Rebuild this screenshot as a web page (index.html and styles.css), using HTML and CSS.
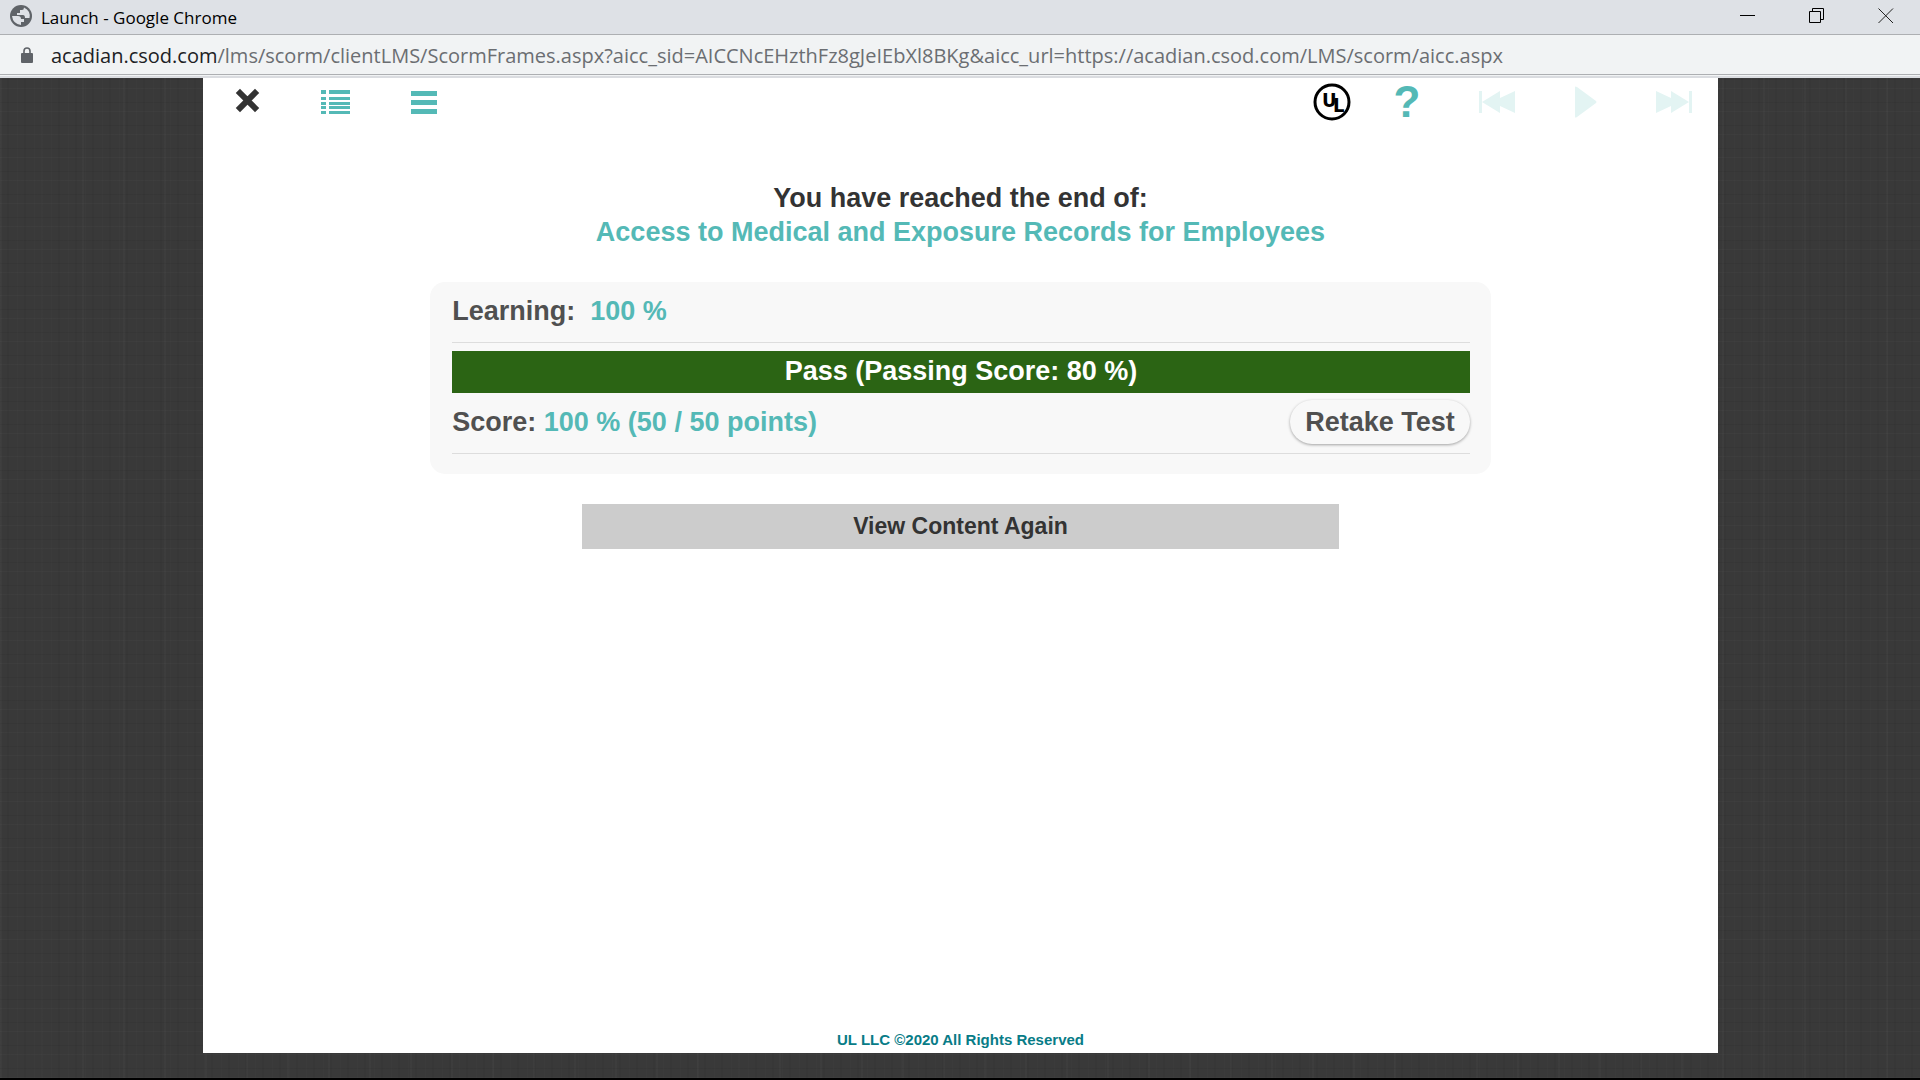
FILE: index.html
```html
<!DOCTYPE html>
<html lang="en">
<head>
<meta charset="UTF-8">
<meta name="viewport" content="width=device-width, initial-scale=1.0">
<title>Launch</title>
<link rel="stylesheet" href="styles.css">
</head>
<body>

<!-- Window title bar -->
<div class="titlebar">
    <svg class="globe" viewBox="0 0 22 22" width="22" height="22" aria-hidden="true">
        <circle cx="11" cy="11" r="11" fill="#5f6368"/>
        <path d="M2 11H8Q11 11 11 14H14V17H11V20Q3 19 2 11ZM14 2.500Q14 5 12 5H10V8H7V10H13Q15 10 15 13H19.500Q21 6 14 2.500Z" fill="#dee1e6"/>
    </svg>
    <span class="window-title">Launch - Google Chrome</span>
    <div class="window-buttons">
        <button type="button" aria-label="Minimize">
            <svg viewBox="0 0 16 16" width="16" height="16"><path d="M0 7.5H15" stroke="#000" fill="none"/></svg>
        </button>
        <button type="button" aria-label="Restore">
            <svg viewBox="0 0 16 16" width="16" height="16"><path d="M0.5 3.5H11.5V14.5H0.5ZM3.5 3.5V0.5H14.5V11.5H11.5" stroke="#000" fill="none"/></svg>
        </button>
        <button type="button" aria-label="Close">
            <svg viewBox="0 0 16 16" width="16" height="16"><path d="M0.5 0.5L15 15M15 0.5L0.5 15" stroke="#222" fill="none"/></svg>
        </button>
    </div>
</div>

<!-- Address bar -->
<div class="addressbar">
    <svg class="lock" viewBox="0 0 12 16" width="12" height="16" aria-hidden="true">
        <rect x="0" y="6" width="12" height="10" rx="1" fill="#5f6368"/>
        <path d="M3 7V4Q3 1 6 1T9 4V7" stroke="#5f6368" stroke-width="1.6" fill="none"/>
    </svg>
    <span class="url"><span class="host">acadian.csod.com</span>/lms/scorm/clientLMS/ScormFrames.aspx?aicc_sid=AICCNcEHzthFz8gJeIEbXl8BKg&amp;aicc_url=https://acadian.csod.com/LMS/scorm/aicc.aspx</span>
</div>

<div class="backdrop">
    <div class="course">
        <nav class="toolbar">
            <button type="button" aria-label="Exit">
                <svg viewBox="0 0 26 28" width="26" height="28"><path d="M6 5L21 20M21 5L6 20" stroke="#333" stroke-width="6" stroke-linecap="square" fill="none"/></svg>
            </button>
            <button type="button" aria-label="Outline">
                <svg viewBox="0 0 29 24" width="29" height="24" fill="#54b9b6">
                    <path d="M0 0H5V4H0ZM8 0H29V4H8ZM0 7H5V10H0ZM8 7H29V10H8ZM0 12H5V15H0ZM8 12H29V15H8ZM0 16H5V19H0ZM8 16H29V19H8ZM0 21H5V24H0ZM8 21H29V24H8Z"/>
                </svg>
            </button>
            <button type="button" aria-label="Menu">
                <svg viewBox="0 0 28 24" width="28" height="24" fill="#54b9b6"><path d="M2 1H28V6H2ZM2 10H28V15H2ZM2 19H28V24H2Z"/></svg>
            </button>
            <button type="button" class="logo" aria-label="About UL">
                <svg viewBox="0 0 38 38" width="38" height="38">
                    <circle cx="19" cy="19" r="17" fill="#fff" stroke="#000" stroke-width="3"/>
                    <text class="logo-text" x="9" y="24">U</text>
                    <text class="logo-text" x="20" y="29">L</text>
                </svg>
            </button>
            <button type="button" class="help" aria-label="Help">?</button>
            <button type="button" aria-label="Previous" disabled>
                <svg viewBox="0 0 38 24" width="38" height="24" fill="#e3f4f3"><path d="M0 1H3V23H0ZM3 12L21 1V8L36 1V23L21 16V23Z"/></svg>
            </button>
            <button type="button" aria-label="Play" disabled>
                <svg viewBox="0 0 22 32" width="22" height="32" fill="#e3f4f3"><path d="M0 1Q0 0 2 1L21 15Q22 16 21 17L2 31Q0 32 0 31Z"/></svg>
            </button>
            <button type="button" aria-label="Next" disabled>
                <svg viewBox="0 0 36 24" width="36" height="24" fill="#e3f4f3"><path d="M36 1H33V23H36ZM33 12L15 1V8L0 1V23L15 16V23Z"/></svg>
            </button>
        </nav>

        <main class="summary">
            <h1>You have reached the end of:<br><span class="course-name">Access to Medical and Exposure Records for Employees</span></h1>

            <div class="results">
                <div class="row">
                    <span>Learning: &nbsp;<span class="value">100 %</span></span>
                </div>
                <div class="pass">Pass (Passing Score: 80 %)</div>
                <div class="row">
                    <span>Score: <span class="value">100 % (50 / 50 points)</span></span>
                    <button type="button" class="retake">Retake Test</button>
                </div>
            </div>

            <button type="button" class="view-again">View Content Again</button>
        </main>

        <footer>UL LLC ©2020 All Rights Reserved</footer>
    </div>
</div>

</body>
</html>
```

FILE: styles.css
```css
* {
    box-sizing: border-box;
}
body {
    margin: 0;
    min-height: 100vh;
    display: flex;
    flex-direction: column;
    font-family: "Liberation Sans", Arial, sans-serif;
    border-bottom: 2px solid #000;
}
button {
    border: 0;
    padding: 0;
    background: none;
    font-family: inherit;
    cursor: pointer;
}
svg {
    display: block;
}

/* Browser window */
.titlebar {
    display: flex;
    align-items: center;
    height: 35px;
    padding-left: 10px;
    background-color: #dee1e6;
    border-bottom: 1px solid #adafb2;
    font-family: "Open Sans", "Noto Sans", sans-serif;
}
.globe {
    margin-bottom: 2px;
}
.window-title {
    margin-left: 9px;
    font-size: 17px;
    color: #000;
}
.window-buttons {
    display: flex;
    margin-left: auto;
    padding-bottom: 2px;
}
.window-buttons button {
    display: flex;
    justify-content: center;
    width: 69px;
}
.addressbar {
    display: flex;
    align-items: center;
    height: 43px;
    padding: 0 21px 1px;
    background-color: #f1f3f4;
    border-bottom: 2px solid #dadce0;
    box-shadow: inset 0 -1px #f1f3f4, inset 0 -2px #adafb2;
    font-family: "Open Sans", "Noto Sans", sans-serif;
}
.url {
    margin-left: 18px;
    font-size: 20px;
    white-space: nowrap;
    color: #6b6e72;
}
.host {
    color: #202124;
}

/* Dark linen behind the course */
.backdrop {
    flex: 1;
    display: flex;
    padding: 0 202px 25px 203px;
    background-color: #393939;
    background-image:
        repeating-linear-gradient(90deg, rgba(255, 255, 255, 0.01) 0 1px, transparent 1px 7px, rgba(0, 0, 0, 0.04) 7px 9px, transparent 9px 17px),
        repeating-linear-gradient(0deg, rgba(255, 255, 255, 0.02) 0 1px, transparent 1px 9px, rgba(0, 0, 0, 0.05) 9px 10px, transparent 10px 23px),
        repeating-linear-gradient(90deg, rgba(255, 255, 255, 0.02) 0 2px, transparent 2px 41px);
}
.course {
    flex: 1;
    display: flex;
    flex-direction: column;
    background-color: #fff;
}

/* Toolbar */
.toolbar {
    display: flex;
    height: 48px;
}
.toolbar button {
    display: flex;
    justify-content: center;
    align-items: center;
    width: 88px;
}
.toolbar .logo {
    width: 60px;
    margin-left: auto;
}
.toolbar .help {
    width: 90px;
    margin-right: 2px;
    font-size: 44px;
    line-height: 48px;
    font-weight: bold;
    color: #54b9b6;
}
.logo-text {
    font-family: "Liberation Sans Narrow", "DejaVu Sans Condensed", sans-serif;
    font-size: 20px;
    font-weight: bold;
}

/* Results */
.summary {
    flex: 1;
    display: flex;
    flex-direction: column;
    align-items: center;
    padding-top: 55px;
}
h1 {
    margin: 0 0 33px;
    font-size: 27px;
    line-height: 34px;
    text-align: center;
    color: #333;
}
.course-name,
.value {
    color: #54b9b6;
}
.results {
    width: 70%;
    padding: 0 21px 20px 22px;
    border-radius: 15px;
    background-color: #f8f8f8;
    font-size: 27px;
    font-weight: bold;
    color: #505050;
}
.row {
    display: flex;
    justify-content: space-between;
    align-items: center;
    height: 61px;
    padding-bottom: 2px;
    border-bottom: 1px solid #ddd;
}
.pass {
    margin-top: 8px;
    line-height: 40px;
    padding-bottom: 2px;
    background-color: #2b6414;
    color: #fff;
    text-align: center;
}
.retake {
    height: 44px;
    padding: 0 15px;
    border-radius: 22px;
    font-size: 27px;
    font-weight: bold;
    color: #505050;
    box-shadow: 0 1px 3px rgba(0, 0, 0, 0.35);
}
.view-again {
    width: 50%;
    height: 45px;
    margin-top: 30px;
    background-color: #ccc;
    font-size: 23px;
    font-weight: bold;
    color: #333;
}
footer {
    padding-bottom: 4px;
    font-size: 15px;
    line-height: 18px;
    font-weight: bold;
    text-align: center;
    color: #087c87;
}
```
